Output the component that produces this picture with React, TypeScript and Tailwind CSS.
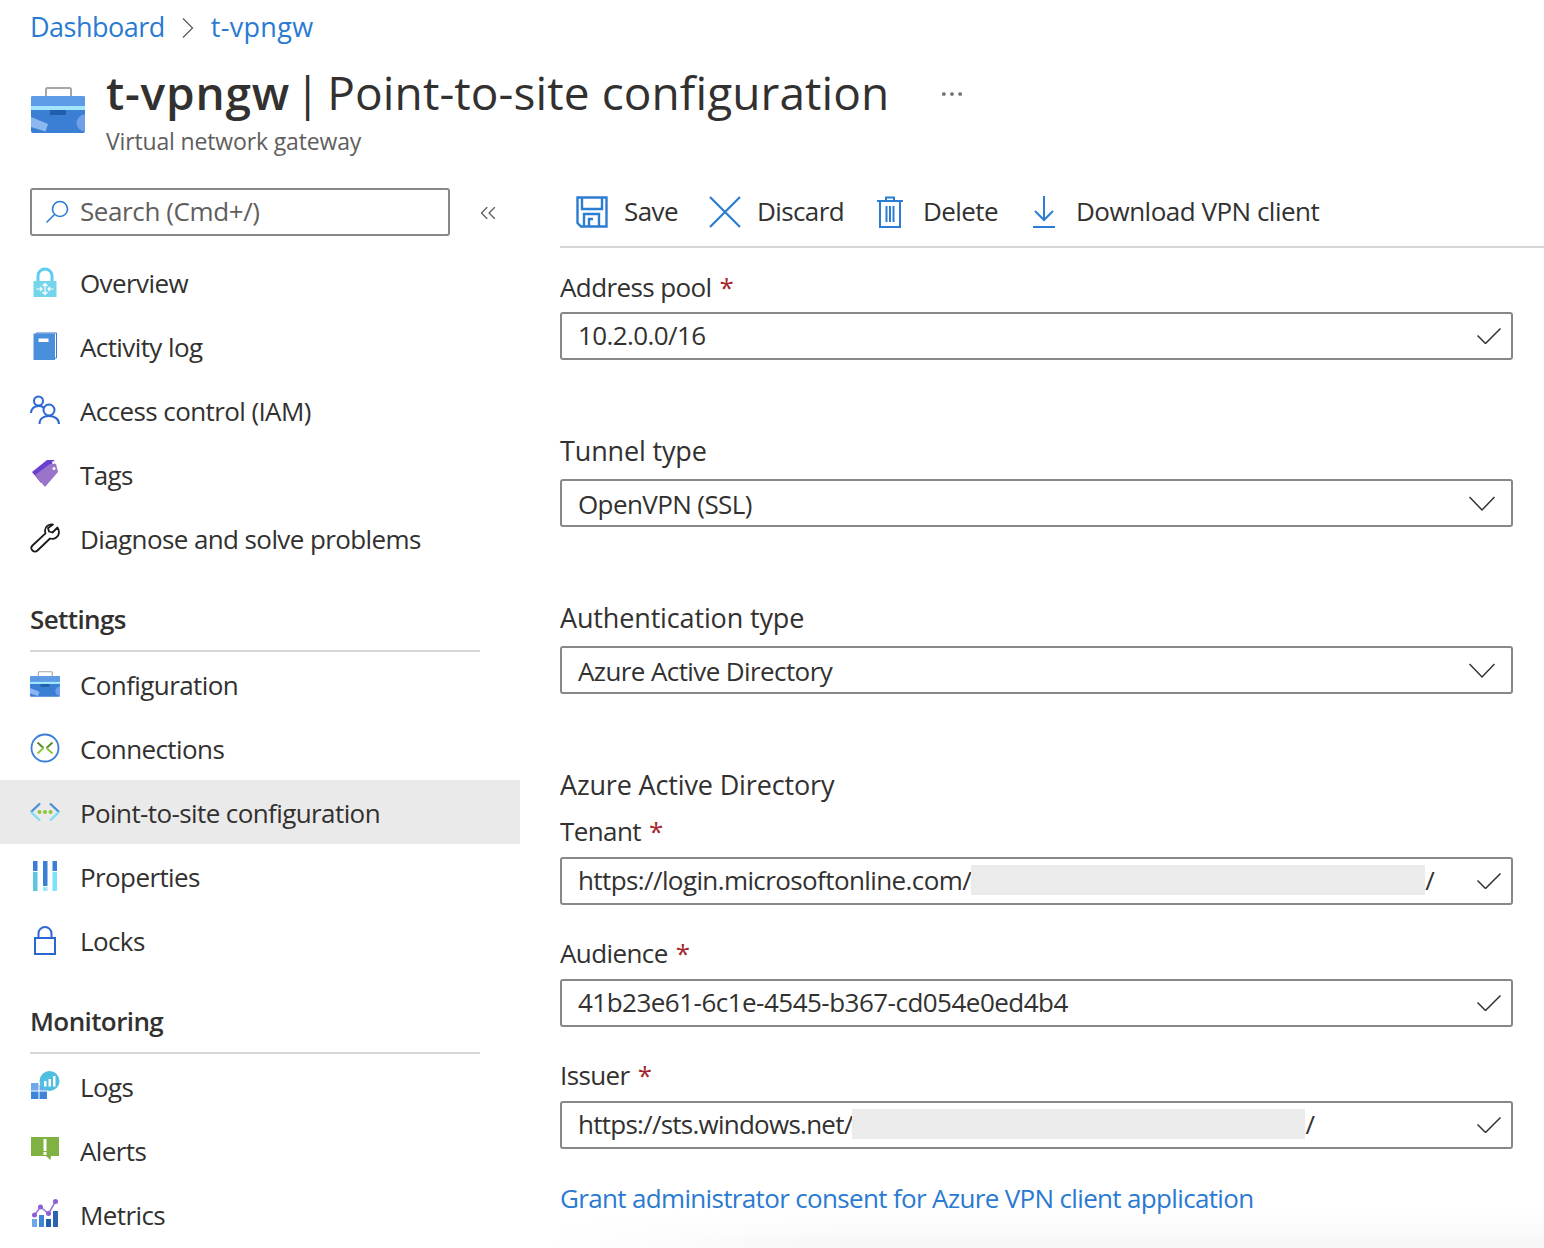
import { ChevronsLeft, MoreHorizontal } from "lucide-react";
import type { ReactNode } from "react";

const Briefcase = ({ className }: { className: string }) => (
  <svg viewBox="0 0 54 46" className={className}>
    <path d="M15 10V2.500a1.500 1.500 0 0 1 1.500-1.500h22a1.500 1.500 0 0 1 1.500 1.500V10" fill="none" stroke="#a6a6a6" strokeWidth="2" />
    <rect y="9" width="54" height="37" rx="2" fill="#3b7fd4" />
    <path d="M0 11a2 2 0 0 1 2-2h50a2 2 0 0 1 2 2v8H0z" fill="#5e9be6" />
    <rect y="19" width="54" height="4" fill="#a3e6fb" />
    <rect x="19" y="23" width="16" height="5" fill="#1f5ea8" />
    <path d="M0 30l17 7-2.500 7.500L0 40z" fill="#8cb8f0" />
    <path d="M54 27.500a8.500 8.500 0 1 0 0 17z" fill="#6f9fe8" />
  </svg>
);

const Icon = ({ children }: { children: ReactNode }) => (
  <svg viewBox="0 0 30 30" className="h-[30px] w-[30px] shrink-0">
    {children}
  </svg>
);

const overview = [
  {
    label: "Overview",
    icon: (
      <Icon>
        <path d="M8 15V9a7 7 0 0 1 14 0v6" fill="none" stroke="#5fcdf0" strokeWidth="3" />
        <path d="M3.500 14h23v16h-23z" fill="#74d4ec" />
        <path d="M15 16.500v11M12.500 19L15 16.500l2.500 2.500M12.500 25l2.500 2.500 2.500-2.500M6.500 22h5.500M10 20l2 2-2 2M23.500 22H18M20 20l-2 2 2 2" fill="none" stroke="#fff" strokeWidth="1.200" />
      </Icon>
    ),
  },
  {
    label: "Activity log",
    icon: (
      <Icon>
        <path d="M6 2h20.500v25H6" fill="none" stroke="#3a7cc9" strokeWidth="1" />
        <path d="M3.500 2.500h21.500v26.500H3.500z" fill="#4a8fdc" />
        <rect x="8.500" y="7.500" width="10" height="3.500" fill="#fff" />
      </Icon>
    ),
  },
  {
    label: "Access control (IAM)",
    icon: (
      <Icon>
        <g fill="none" stroke="#2a66d4" strokeWidth="2">
          <circle cx="8.500" cy="6" r="4.500" />
          <path d="M1 18c0-4 3-7 7.500-7 2 0 3.500.3 5 1.300" />
          <circle cx="19" cy="15" r="5.500" />
          <path d="M9.500 29c0-5 4-8 9.500-8s10 3 10 8" />
        </g>
      </Icon>
    ),
  },
  {
    label: "Tags",
    icon: (
      <Icon>
        <path d="M2 13L17 1h7l2 7L11 24z" fill="#6a3fd0" />
        <path d="M5 16L20 5h6l2 8-13 15z" fill="#9a74c9" />
        <circle cx="23.500" cy="3.500" r="1.500" fill="#fff" />
        <circle cx="24" cy="9.500" r="1.500" fill="#fff" />
      </Icon>
    ),
  },
  {
    label: "Diagnose and solve problems",
    icon: (
      <Icon>
        <path
          d="M27.500 4.500l-5 5-3.500-1-1-3.500 5-3.500c-4-1-8 2-8 6 0 1 .2 2 .5 2.800L2.500 22.500c-1.500 1.500-1.500 3.500 0 5s3.500 1.500 5 0L20 15.500c4.500 1.500 9-2 9-6.500 0-1.500-.5-3-1.500-4.500z"
          fill="none"
          stroke="#1a1a1a"
          strokeWidth="1.800"
          strokeLinejoin="round"
        />
      </Icon>
    ),
  },
];

const settings = [
  { label: "Configuration", icon: <Briefcase className="h-[26px] w-[30px] shrink-0" /> },
  {
    label: "Connections",
    icon: (
      <Icon>
        <circle cx="15" cy="15" r="13.500" fill="none" stroke="#3a7fd5" strokeWidth="1.800" />
        <path d="M7.500 9.500L13.500 15M22.500 9.500L16.500 15" fill="none" stroke="#5a8a2c" strokeWidth="2" />
        <path d="M13.500 15l-6 5.500M16.500 15l6 5.500" fill="none" stroke="#8cc63f" strokeWidth="2" />
      </Icon>
    ),
  },
  {
    label: "Point-to-site configuration",
    icon: (
      <Icon>
        <path d="M10 6.500L1 15M20 6.500L29 15" fill="none" stroke="#4a90d9" strokeWidth="2.400" />
        <path d="M1 15l9 8.500M29 15l-9 8.500" fill="none" stroke="#7ddcf7" strokeWidth="2.400" />
        <circle cx="9.500" cy="15" r="2" fill="#8cc63f" />
        <circle cx="15" cy="15" r="2" fill="#8cc63f" />
        <circle cx="20.500" cy="15" r="2" fill="#8cc63f" />
      </Icon>
    ),
  },
  {
    label: "Properties",
    icon: (
      <Icon>
        <path d="M3 0h4.500v10H3zM13 0h4.500v25H13zM22.500 0H27v10h-4.500z" fill="#3a7fd5" />
        <path d="M3 11h4.500v19H3z" fill="#5fc4e0" />
        <path d="M13 26h4.500v4H13z" fill="#9fe4fb" />
        <path d="M22.500 11H27v19h-4.500z" fill="#7de3fb" />
      </Icon>
    ),
  },
  {
    label: "Locks",
    icon: (
      <Icon>
        <path d="M8.500 13V8.500a6.500 6.500 0 0 1 13 0V13" fill="none" stroke="#2a66d4" strokeWidth="2" />
        <rect x="5" y="13" width="20" height="16" fill="none" stroke="#2a66d4" strokeWidth="2" />
      </Icon>
    ),
  },
];

const monitoring = [
  {
    label: "Logs",
    icon: (
      <Icon>
        <path d="M1 12h7.500v7.500H1z" fill="#6fa8ea" />
        <path d="M1 20.500h7.500V28H1zM9.500 20.500H17V28H9.500z" fill="#3d85d8" />
        <path d="M9.500 14H17v5.500H9.500z" fill="#6fa8ea" />
        <circle cx="19.500" cy="10" r="10" fill="#4fbfe0" />
        <path d="M14 10h2.500v5.500H14zM18.500 8H21v7.500h-2.500zM23 5h2.500v10.500H23z" fill="#fff" />
      </Icon>
    ),
  },
  {
    label: "Alerts",
    icon: (
      <Icon>
        <path d="M1 2h28v19H21l-.5 4-4.500-4H1z" fill="#7fb241" />
        <rect x="13.500" y="4" width="3" height="12" fill="#fff" />
        <rect x="13.500" y="17" width="3" height="3" fill="#fff" />
      </Icon>
    ),
  },
  {
    label: "Metrics",
    icon: (
      <Icon>
        <path d="M2 20h5v8H2z" fill="#6fa8ea" />
        <path d="M9 16h5v12H9z" fill="#3d85d8" />
        <path d="M16 20h5v8h-5z" fill="#1f5ea8" />
        <path d="M23 12h5v16h-5z" fill="#2a66b0" />
        <path d="M4.500 16L10.500 8l8 6.500L25.500 2.500" fill="none" stroke="#9a74e0" strokeWidth="1.500" />
        <circle cx="4.500" cy="16" r="2.500" fill="#8a5fd8" />
        <circle cx="10.500" cy="8" r="2.500" fill="#8a5fd8" />
        <circle cx="18.500" cy="14.500" r="2.500" fill="#8a5fd8" />
        <circle cx="25.500" cy="2.500" r="2.500" fill="#8a5fd8" />
      </Icon>
    ),
  },
];

const NavRow = ({ label, icon, active }: { label: string; icon: ReactNode; active?: boolean }) => (
  <div className={`flex h-16 items-center pl-[30px] ${active ? "bg-[#ebeaea]" : ""}`}>
    <div className="flex w-[50px] items-center">{icon}</div>
    <span className="pt-[2px] text-[26px]/[40px] tracking-[-0.6px]">{label}</span>
  </div>
);

const SectionTitle = ({ children }: { children: ReactNode }) => (
  <div className="mx-[30px] w-[450px] border-b-2 border-[#d6d6d6] pb-[11px] text-[26px]/[40px] font-semibold tracking-[-0.6px]">
    {children}
  </div>
);

const Label = ({ children, required }: { children: ReactNode; required?: boolean }) => (
  <div className="flex h-10 items-center gap-2 pb-[2px] text-[26px] tracking-[-0.6px]">
    <span>{children}</span>
    {required && <span className="text-[#a4262c]">*</span>}
  </div>
);

const SectionLabel = ({ children }: { children: ReactNode }) => (
  <div className="flex h-10 items-center text-[27px] tracking-[-0.15px]">{children}</div>
);

const Field = ({ children, chevron }: { children: ReactNode; chevron?: boolean }) => (
  <div className={`flex h-12 w-[953px] items-center rounded-[3px] border-2 border-[#8a8886] pl-4 ${chevron ? "pr-4" : "pr-[10px]"}`}>
    <div className={`flex min-w-0 flex-1 items-center text-[26px] tracking-[-0.6px] ${chevron ? "pt-[2px]" : "pb-[2px]"}`}>
      {children}
    </div>
    {chevron ? (
      <svg viewBox="0 0 26 16" className="mt-[2px] h-4 w-[26px]" fill="none" stroke="#323130" strokeWidth="1.500">
        <path d="M0.500 1l12.500 13L25.500 1" />
      </svg>
    ) : (
      <svg viewBox="0 0 24 16" className="mb-[1px] mt-[1px] h-4 w-6" fill="none" stroke="#323130" strokeWidth="1.500">
        <path d="M0.500 7.500l8 8L23.500 0.500" />
      </svg>
    )}
  </div>
);

const Redacted = ({ width }: { width: string }) => <span className={`h-[30px] bg-[#ebebeb] ${width}`} />;

const App = () => (
  <div className="relative h-[1248px] overflow-hidden bg-white font-['Open_Sans',sans-serif] text-[#323130]">
    <div className="flex h-[55px] items-center pl-[30px] text-[27px] text-[#2a7ad2]">
      <span className="tracking-[-0.5px]">Dashboard</span>
      <svg viewBox="0 0 12 20" className="ml-[17px] h-5 w-3" fill="none" stroke="#605e5c" strokeWidth="1.300">
        <path d="M1 0.500L10.500 10 1 19.500" />
      </svg>
      <span className="ml-[17px] tracking-[0.3px]">t-vpngw</span>
    </div>

    <div className="flex h-[133px] pl-[31px]">
      <Briefcase className="mt-[32px] h-[46px] w-[54px]" />
      <div className="ml-[21px]">
        <div className="flex items-center">
          <h1 className="flex text-[46px]/[74px]">
            <span className="font-semibold tracking-[0.8px]">t-vpngw</span>
            <span className="ml-[5px]">|</span>
            <span className="ml-[7px] tracking-[0.1px]">Point-to-site configuration</span>
          </h1>
          <MoreHorizontal className="ml-[49px] mt-1 h-7 w-7 text-[#605e5c]" strokeWidth={1.200} />
        </div>
        <div className="pt-[1px] text-[23px]/[22px] tracking-[-0.15px] text-[#605e5c]">Virtual network gateway</div>
      </div>
    </div>

    <div className="flex">
      <aside className="w-[520px] shrink-0">
        <div className="flex items-center pl-[30px]">
          <div className="flex h-12 w-[420px] items-center gap-[10px] rounded-[3px] border-2 border-[#8a8886] pl-3">
            <svg viewBox="0 0 26 26" className="h-[26px] w-[26px]" fill="none" stroke="#2a7ad2" strokeWidth="1.600">
              <circle cx="16" cy="10" r="7.500" />
              <path d="M10.500 15.500L2.500 23.500" />
            </svg>
            <span className="pb-[2px] text-[26px] tracking-[-0.4px] text-[#605e5c]">Search (Cmd+/)</span>
          </div>
          <ChevronsLeft className="ml-[25px] mt-[1px] h-[26px] w-[26px] text-[#605e5c]" strokeWidth={1.200} />
        </div>
        <div className="mt-[14px]">
          {overview.map((r) => (
            <NavRow key={r.label} {...r} />
          ))}
        </div>
        <div className="mt-[29px]">
          <SectionTitle>Settings</SectionTitle>
        </div>
        <div>
          {settings.map((r) => (
            <NavRow key={r.label} {...r} active={r.label === "Point-to-site configuration"} />
          ))}
        </div>
        <div className="mt-[29px]">
          <SectionTitle>Monitoring</SectionTitle>
        </div>
        <div>
          {monitoring.map((r) => (
            <NavRow key={r.label} {...r} />
          ))}
        </div>
      </aside>

      <main className="min-w-0 flex-1 pl-[40px]">
        <div className="border-b-2 border-[#d6d6d6] pb-[10px] pl-4">
          <div className="flex h-12 items-center text-[26px] tracking-[-0.6px]">
            <svg viewBox="0 0 32 32" className="h-8 w-8" fill="none" stroke="#2b7cd3" strokeWidth="2.400">
              <path d="M1.500 1.500h29v29H5l-3.500-3.500z" />
              <path d="M6 1.500v11.500h20V1.500M8 30v-12h15v12M13 30v-7h4" />
            </svg>
            <span className="ml-4 w-[53px] pb-[2px]">Save</span>
            <svg viewBox="0 0 32 32" className="ml-8 h-8 w-8" stroke="#2b7cd3" strokeWidth="2.200">
              <path d="M1 1l30 30M31 1L1 31" />
            </svg>
            <span className="ml-4 w-[85px] pb-[2px]">Discard</span>
            <svg viewBox="0 0 26 32" className="ml-[35px] h-8 w-[26px]" fill="none" stroke="#2b7cd3" strokeWidth="2">
              <path d="M0 5h26M3 5v26h20V5M9 5V1.500h8V5M9.500 10v16M13 10v16M16.500 10v16" />
            </svg>
            <span className="ml-5 w-[73px] pb-[2px]">Delete</span>
            <svg viewBox="0 0 24 32" className="ml-[36px] h-8 w-6" fill="none" stroke="#2b7cd3" strokeWidth="2">
              <path d="M12 0v24M3 15l9 9 9-9M1 31h22" />
            </svg>
            <span className="ml-5 pb-[2px] tracking-[-0.5px]">Download VPN client</span>
          </div>
        </div>

        <div className="mt-5">
          <Label required>Address pool</Label>
          <div className="mt-[4px]">
            <Field>10.2.0.0/16</Field>
          </div>
        </div>
        <div className="mt-[71px]">
          <SectionLabel>Tunnel type</SectionLabel>
          <div className="mt-[8px]">
            <Field chevron>OpenVPN (SSL)</Field>
          </div>
        </div>
        <div className="mt-[71px]">
          <SectionLabel>Authentication type</SectionLabel>
          <div className="mt-[8px]">
            <Field chevron>Azure Active Directory</Field>
          </div>
        </div>
        <div className="mt-[71px]">
          <SectionLabel>Azure Active Directory</SectionLabel>
        </div>
        <div className="mt-[7px]">
          <Label required>Tenant</Label>
          <div className="mt-[5px]">
            <Field>
              https://login.microsoftonline.com/
              <Redacted width="w-[454px]" />/
            </Field>
          </div>
        </div>
        <div className="mt-[29px]">
          <Label required>Audience</Label>
          <div className="mt-[5px]">
            <Field>
              <span className="tracking-[-0.52px]">41b23e61-6c1e-4545-b367-cd054e0ed4b4</span>
            </Field>
          </div>
        </div>
        <div className="mt-[29px]">
          <Label required>Issuer</Label>
          <div className="mt-[5px]">
            <Field>
              <span className="tracking-[-0.75px]">https://sts.windows.net/</span>
              <Redacted width="w-[453px]" />/
            </Field>
          </div>
        </div>
        <div className="mt-[29px] text-[26px]/[40px] tracking-[-0.66px] text-[#2a7ad2]">
          Grant administrator consent for Azure VPN client application
        </div>
      </main>
    </div>
    <div className="pointer-events-none absolute bottom-0 right-0 h-9 w-[1000px] bg-gradient-to-b from-transparent to-[#f6f6f6] [mask-image:linear-gradient(to_right,transparent,black_300px)]" />
  </div>
);

export default App;
